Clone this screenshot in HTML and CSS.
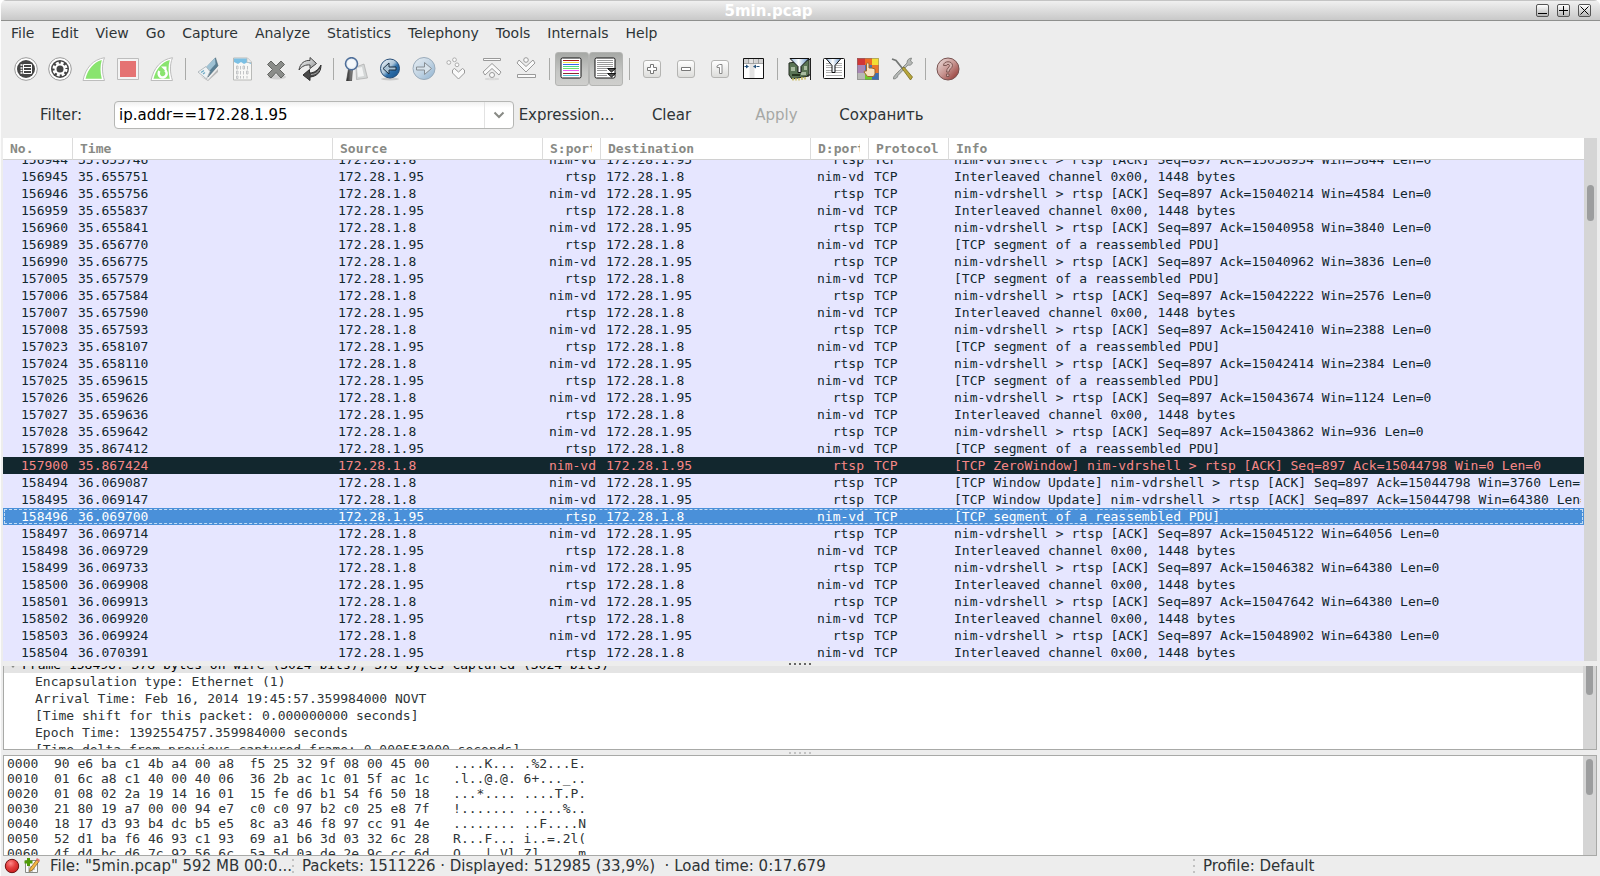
FILE: index.html
```html
<!DOCTYPE html>
<html lang="en">
<head>
<meta charset="utf-8">
<title>5min.pcap</title>
<link rel="stylesheet" href="styles.css">
</head>
<body>
<svg class="defs" aria-hidden="true">
  <defs>
    <linearGradient id="silver" x1="0" y1="0" x2="1" y2="1"><stop offset="0" stop-color="#fff"/><stop offset="1" stop-color="#8d9092"/></linearGradient>
    <linearGradient id="dark" x1="0" y1="0" x2="1" y2="0"><stop offset="0" stop-color="#222"/><stop offset="1" stop-color="#999"/></linearGradient>
    <linearGradient id="blue" x1="0" y1="0" x2="1" y2="1"><stop offset="0" stop-color="#f4f8fb"/><stop offset=".45" stop-color="#a9c3d8"/><stop offset=".6" stop-color="#2d6faa"/><stop offset="1" stop-color="#174f88"/></linearGradient>
    <linearGradient id="paleblue" x1="0" y1="0" x2="1" y2="1"><stop offset="0" stop-color="#e8eef3"/><stop offset=".5" stop-color="#c3d5e4"/><stop offset="1" stop-color="#8fb2d0"/></linearGradient>
    <linearGradient id="red" x1="0" y1="0" x2="1" y2="1"><stop offset="0" stop-color="#eee3e1"/><stop offset=".5" stop-color="#c79490"/><stop offset="1" stop-color="#8c2a26"/></linearGradient>
    <linearGradient id="funnel" x1="0" y1="0" x2="1" y2="0"><stop offset="0" stop-color="#8fb4dc"/><stop offset=".45" stop-color="#fff"/><stop offset="1" stop-color="#5f8fc6"/></linearGradient>
    <linearGradient id="key" x1="0" y1="0" x2="0" y2="1"><stop offset="0" stop-color="#fff"/><stop offset="1" stop-color="#dcdcda"/></linearGradient>
    <radialGradient id="led" cx=".4" cy=".3" r=".7"><stop offset="0" stop-color="#f88"/><stop offset=".5" stop-color="#e44040"/><stop offset="1" stop-color="#cc2020"/></radialGradient>
  </defs>
</svg>
<div class="window">
  <header class="titlebar">
    <h1 class="title">5min.pcap</h1>
    <div class="controls">
      <button class="control" aria-label="Minimize"><svg viewBox="0 0 11 11"><path d="M1 8.500h9"/></svg></button>
      <button class="control" aria-label="Maximize"><svg viewBox="0 0 11 11"><path d="M1 5.500h9M5.500 1v9"/></svg></button>
      <button class="control" aria-label="Close"><svg viewBox="0 0 11 11"><path d="M1.500 1.500l8 8M9.500 1.500l-8 8"/></svg></button>
    </div>
  </header>
  <nav class="menubar">
    <a href="#file">File</a><a href="#edit">Edit</a><a href="#view">View</a><a href="#go">Go</a><a href="#capture">Capture</a><a href="#analyze">Analyze</a><a href="#statistics">Statistics</a><a href="#telephony">Telephony</a><a href="#tools">Tools</a><a href="#internals">Internals</a><a href="#help">Help</a>
  </nav>
  <div class="toolbar" role="toolbar" aria-label="Main toolbar">
    <button class="tool" aria-label="Interfaces"><svg viewBox="0 0 24 24"><circle cx="12" cy="12" r="11.300" fill="#fff" stroke="#9a9a9a"/><circle cx="12" cy="12" r="9" fill="#454545"/><path d="M6.500 8h2M6.500 11h2M6.500 13.500h2M6.500 16h2" stroke="#fff" stroke-width="1.500"/><path d="M9.500 7.500h8v9h-8zM9.500 10.500h8M9.500 13.500h8" fill="none" stroke="#fff"/></svg></button>
    <button class="tool" aria-label="Capture options"><svg viewBox="0 0 24 24"><circle cx="12" cy="12" r="11.300" fill="#fff" stroke="#9a9a9a"/><circle cx="12" cy="12" r="9" fill="#454545"/><circle cx="12" cy="12" r="6" fill="none" stroke="#fff" stroke-width="3" stroke-dasharray="2.800 1.912"/><circle cx="12" cy="12" r="4.500" fill="none" stroke="#fff" stroke-width="2"/></svg></button>
    <button class="tool" aria-label="Start capture"><svg viewBox="0 0 24 24"><path d="M1 23.500C3.500 11 11 2.500 22.500.700 19.500 8 20 16 22.500 23.500z" fill="#fff" stroke="#bdbdbd"/><path d="M3.500 21.800C6 12 11.500 5.500 19.800 3 18 9 18.200 15.500 19.800 21.800z" fill="#89e46f"/></svg></button>
    <button class="tool" aria-label="Stop capture"><svg viewBox="0 0 24 24"><path d="M1.500 1.500h21v21h-21z" fill="#f4f4f4" stroke="#bdbdbd"/><path d="M4 4h16v16H4z" fill="#e57373"/></svg></button>
    <button class="tool" aria-label="Restart capture"><svg viewBox="0 0 24 24"><path d="M1 23.500C3.500 11 11 2.500 22.500.700 19.500 8 20 16 22.500 23.500z" fill="#fff" stroke="#bdbdbd"/><path d="M3.500 21.800C6 12 11.500 5.500 19.800 3 18 9 18.200 15.500 19.800 21.800z" fill="#89e46f"/><path d="M9.500 14a4 4 0 1 0 5.500-.800" fill="none" stroke="#fff" stroke-width="2.500"/><path d="M11 9.500h5.500V15z" fill="#fff"/></svg></button>
    <span class="separator"></span>
    <button class="tool" aria-label="Open"><svg viewBox="0 0 24 24"><path d="M4 19l8 4 10-11v3L12 24z" fill="#555" opacity=".35"/><path d="M9 12L19.500.800l2.500 8L12 20z" fill="#5a7f94" stroke="#496472" stroke-width=".6"/><path d="M9 11L19 1l.5 6-8 9z" fill="#9fc2d4"/><path d="M2 15l8-5.500 4 5L10.500 22z" fill="#eef2f4" stroke="#a5adb2" stroke-width=".8"/><path d="M5 15.500l3-2M7 17l2-1.500" stroke="#6eaac4" stroke-width="1.300"/></svg></button>
    <button class="tool" aria-label="Save"><svg viewBox="0 0 24 24"><path d="M3.500 1h14l4 4v18h-18z" fill="#f8f8f6" stroke="#b9bab8"/><path d="M4 1.500h13l4 4V7l-4-1.500-3 1.500-3-2-3 2L4 5z" fill="#7cc0e4"/><path d="M17 1v4.500h4.500" fill="#eee" stroke="#b9bab8" stroke-width=".7"/><g fill="none" stroke="#c2c4c6"><path d="M6.500 9v3h1.500v-3zM10.500 9v3.500M13 9v3h1.500v-3zM17.500 9v3.500M6.500 14v3h1.500v-3zM10.500 14v3.500M13.500 14v3.500M16.500 14v3h1.500v-3zM6.500 19v2.500h1.500V19zM10.500 19v2.500M13.500 19v2.500M17 19v2.500"/></g></svg></button>
    <button class="tool" aria-label="Close file"><svg viewBox="0 0 24 24"><ellipse cx="13" cy="20" rx="9" ry="2.500" fill="#000" opacity=".12"/><path d="M7 4l5 5 5-5 3.500 3.500-5 5 5 5L17 21l-5-5.500L7 21l-3.500-3.500 5-5-5-5z" fill="#8b8d8a" stroke="#626461" stroke-linejoin="round"/></svg></button>
    <button class="tool" aria-label="Reload"><svg viewBox="0 0 24 24"><path d="M1 13C2 6 7 3 12 3.500V.500L18.500 6.500 12 11.500V8C8 7.500 4 9 1 13z" fill="url(#silver)" stroke="#444"/><path d="M23 8c0 8-5 11.500-11 12v3.500L5 18l6.500-5.500V16c5 0 8.500-3 11.500-8z" fill="#494949" stroke="#2d2d2d"/><path d="M13 17.500c4 0 7-2 8.500-5" fill="none" stroke="#a5a5a5"/></svg></button>
    <span class="separator"></span>
    <button class="tool" aria-label="Find"><svg viewBox="0 0 24 24"><path d="M12 10l8-3 3.500 14-11 1.500z" fill="#d3d6d6" stroke="#aaa" stroke-width=".7"/><path d="M13 11l5-1 2 9-6 1z" fill="#fff" opacity=".7"/><path d="M4.500 12h4L7.500 24h-5z" fill="url(#dark)" stroke="#444" stroke-width=".7"/><circle cx="7.500" cy="6.700" r="6" fill="#e9eff5" stroke="#4f6f9a" stroke-width="1.600"/><circle cx="7.500" cy="6.700" r="4" fill="#fff" opacity=".6"/></svg></button>
    <button class="tool" aria-label="Back"><svg viewBox="0 0 24 24"><ellipse cx="12" cy="22" rx="9" ry="1.500" opacity=".15"/><circle cx="12" cy="11.500" r="9.500" fill="url(#blue)" stroke="#294f78"/><path d="M5 11.500l6-5.500v4h7v3h-7v4z" fill="#a9c3d6" stroke="#1c2e40"/></svg></button>
    <button class="tool" aria-label="Forward"><svg viewBox="0 0 24 24"><circle cx="12" cy="11.500" r="11" fill="url(#paleblue)" stroke="#9aabba"/><path d="M19.500 11.500l-7-6v4.500h-8v3h8v4.500z" fill="#d8e3eb" stroke="#878e94"/></svg></button>
    <button class="tool" aria-label="Go to packet"><svg viewBox="0 0 24 24" fill="#fafafa" stroke="#adadad"><circle cx="2.800" cy="5.500" r="1.900"/><circle cx="8.500" cy="2.800" r="1.900"/><circle cx="11" cy="7.800" r="1.900"/><path d="M6.500 13l2-1.500 4 3.500 4-3.500 2 1.500v3l-6 6-6-6z" stroke="#999"/></svg></button>
    <button class="tool" aria-label="First packet"><svg viewBox="0 0 24 24" fill="#fafafa" stroke="#999"><path d="M3.500 1.500h17v2h-17z"/><path d="M12 6.500l9 8.500-2 3-7-6.500L5 18l-2-3z"/><circle cx="12" cy="18" r="2.500"/><ellipse cx="12" cy="22" rx="7" ry=".7" opacity=".25"/></svg></button>
    <button class="tool" aria-label="Last packet"><svg viewBox="0 0 24 24" fill="#fafafa" stroke="#999"><circle cx="12" cy="3" r="2.300"/><path d="M3 6l2-3 7 6.500L19 3l2 3-9 9z"/><path d="M3.500 17.500h18v3h-18z"/></svg></button>
    <span class="separator"></span>
    <button class="tool pressed" aria-label="Colorize" aria-pressed="true"><svg viewBox="1 1 24 24"><rect x="2" y="2" width="20" height="20" rx="1.500" fill="#fff" stroke="#111"/><path d="M4 4.500h16" stroke="#a31818"/><path d="M4 6.500h16" stroke="#f3e04a"/><path d="M4 8.500h16" stroke="#3767f0"/><path d="M4 10.500h16" stroke="#4cd787"/><path d="M4 12.500h16" stroke="#6fe06f"/><path d="M4 14.500h16" stroke="#ee5bee"/><path d="M4 17.500h16" stroke="#8e2430"/><path d="M4 19.500h16" stroke="#56c7d6"/></svg></button>
    <button class="tool pressed" aria-label="Auto scroll" aria-pressed="true"><svg viewBox="1 1 24 24"><rect x="2" y="2" width="20" height="20" rx="1.500" fill="#fff" stroke="#111"/><path d="M4 4.500h16M4 6.500h16M4 8.500h16M4 10.500h16M4 12.500h10M4 14.500h10M4 17.500h10M4 19.500h10" stroke="#999"/><path d="M14.500 12.500h8l-4 3.500zM14.500 17.500h8l-4 3.500z" fill="#555" stroke="#111" stroke-linejoin="round"/></svg></button>
    <span class="separator"></span>
    <button class="tool" aria-label="Zoom in"><svg viewBox="0 0 24 24"><rect x="3.500" y="3.500" width="17" height="17" rx="2.500" fill="url(#key)" stroke="#b4b4b2"/><path d="M10.500 7.500h3v3h3v3h-3v3h-3v-3h-3v-3h3z" fill="#fff" stroke="#777"/></svg></button>
    <button class="tool" aria-label="Zoom out"><svg viewBox="0 0 24 24"><rect x="3.500" y="3.500" width="17" height="17" rx="2.500" fill="url(#key)" stroke="#b4b4b2"/><path d="M7.500 10.500h9v3h-9z" fill="#fff" stroke="#777"/></svg></button>
    <button class="tool" aria-label="Normal size"><svg viewBox="0 0 24 24"><rect x="3.500" y="3.500" width="17" height="17" rx="2.500" fill="url(#key)" stroke="#b4b4b2"/><path d="M9 10.500v-1.500l2.500-1.500h2.500v9h-2.500v-6z" fill="#fff" stroke="#888"/></svg></button>
    <button class="tool" aria-label="Resize columns"><svg viewBox="0 0 24 24"><path d="M2 2h20v20H2z" fill="#fff"/><path d="M2 2h20v4.500H2z" fill="#d2d2d2"/><path d="M7.500 2h5v20h-5z" fill="#e3e3e3"/><path d="M6.500 2v4.500M11.500 2v4.500M16.500 2v4.500M2 6.500h20" stroke="#888" stroke-width=".7"/><path d="M1.500 1.500h20v20h-20z" fill="none" stroke="#111"/><path d="M2.500 9.500h3M17.500 9.500h-3" stroke="#24527c"/><path d="M4 7.500l3 2-3 2zM14 7.500l-3 2 3 2z" fill="#24527c"/></svg></button>
    <span class="separator"></span>
    <button class="tool" aria-label="Capture filters"><svg viewBox="0 0 24 24"><path d="M1 6l20-3v16l-17 3-3-4z" fill="#5a7455" stroke="#222b20"/><path d="M22.500 1v22M20 2.500h3M19 18.500l4-1" stroke="#222"/><path d="M3 10h4v4H3zM16 9h3v4h-3zM13 15h5v3h-5z" fill="#a9bba0"/><path d="M4 17h8v2H4z" fill="#26341f"/><path d="M5 21v2.500M8 21v2.500M11 21v2.500M14 20v3M17 20v2.500" stroke="#c9bd62" stroke-width="1.500"/><path d="M2 1.500h19l-8 8v6h-3v-6z" fill="url(#funnel)" stroke="#111"/></svg></button>
    <button class="tool" aria-label="Display filters"><svg viewBox="1 1 24 24"><rect x="2.500" y="2.500" width="21" height="20" rx="1" fill="#fff" stroke="#111"/><path d="M5 7.500h16M5 9.500h16M5 11.500h16M5 14.500h16M5 16.500h16M5 19.500h16" stroke="#b0b0b0"/><path d="M5 2.500h15l-6 7v7h-3v-7z" fill="url(#funnel)" stroke="#111"/></svg></button>
    <button class="tool" aria-label="Coloring rules"><svg viewBox="0 0 24 24"><path d="M1 1h8v7H1z" fill="#d13636"/><path d="M9 1h7v7H9z" fill="#ee6a23"/><path d="M16 1h7v7h-7z" fill="#f3df35"/><path d="M1 8h8v8H1z" fill="#a986b5"/><path d="M9 8h7v8H9z" fill="#4774b4"/><path d="M16 8h7v8h-7z" fill="#e9772c"/><path d="M1 16h8v7H1z" fill="#b8b8b5"/><path d="M9 16h7v7H9z" fill="#6fc92d"/><path d="M16 16h7v7h-7z" fill="#3b6db3"/><path d="M1.500 1.500h21v21h-21z" fill="none" stroke="#777" stroke-opacity=".5"/><path d="M10.500 6.500q1.500-1.500 2.500 0v4.500q3-.5 6 1v5l-1.500 2.500h-6L8 15q0-1.500 2.500-1z" fill="#f8e1bf" stroke="#a1672a"/></svg></button>
    <button class="tool" aria-label="Preferences"><svg viewBox="0 0 24 24"><path d="M3.500 22c-.5-3 2-3.500 2.500-5L17 6c0-3 1.500-4.500 4.500-5l-1 3 2 1.500c-1 3-3 3-4.500 2.500L8 18.500c-.5 2-2 3.500-4.500 3.500z" fill="#b5b8b6" stroke="#7a7d7b" stroke-width=".8"/><path d="M2 2l4 1.500 6.500 8" fill="none" stroke="#747775" stroke-width="1.800"/><path d="M12 11.500l2-1.500 8.500 10-2 3z" fill="#b7a63c" stroke="#786c20" stroke-width=".8"/></svg></button>
    <span class="separator"></span>
    <button class="tool" aria-label="Help"><svg viewBox="0 0 24 24"><circle cx="12" cy="12" r="11" fill="url(#red)" stroke="#785250"/><path d="M7.500 8.500c0-5 9-5 9 0 0 3-3.500 3.200-3.500 6.500h-2.500c0-4 3-4.500 3-6.500 0-1.500-3-1.500-3 0zM10.500 17h2.500v2.500h-2.500z" fill="#d5b2ae" stroke="#76504d" stroke-width=".9"/></svg></button>
  </div>
  <form class="filterbar">
    <label class="filter-label" for="filter">Filter:</label>
    <div class="combo">
      <input id="filter" class="combo-input" type="text" value="ip.addr==172.28.1.95" spellcheck="false" autocomplete="off">
      <button class="combo-arrow" type="button" aria-label="Recent filters"><svg viewBox="0 0 12 8"><path d="M1.500 1.500L6 6l4.500-4.500"/></svg></button>
    </div>
    <button class="action" type="button">Expression...</button>
    <button class="action" type="button">Clear</button>
    <button class="action" type="button" disabled>Apply</button>
    <button class="action" type="button" lang="ru">Сохранить</button>
  </form>
  <main class="panes">
    <section class="pane list">
      <table class="packets">
        <thead>
          <tr><th>No.</th><th>Time</th><th>Source</th><th>S:port</th><th>Destination</th><th>D:port</th><th>Protocol</th><th>Info</th></tr>
        </thead>
        <tbody>
          <tr><td>156944</td><td>35.655746</td><td>172.28.1.8</td><td>nim-vd</td><td>172.28.1.95</td><td>rtsp</td><td>TCP</td><td>nim-vdrshell &gt; rtsp [ACK] Seq=897 Ack=15038954 Win=5844 Len=0</td></tr>
          <tr><td>156945</td><td>35.655751</td><td>172.28.1.95</td><td>rtsp</td><td>172.28.1.8</td><td>nim-vd</td><td>TCP</td><td>Interleaved channel 0x00, 1448 bytes</td></tr>
          <tr><td>156946</td><td>35.655756</td><td>172.28.1.8</td><td>nim-vd</td><td>172.28.1.95</td><td>rtsp</td><td>TCP</td><td>nim-vdrshell &gt; rtsp [ACK] Seq=897 Ack=15040214 Win=4584 Len=0</td></tr>
          <tr><td>156959</td><td>35.655837</td><td>172.28.1.95</td><td>rtsp</td><td>172.28.1.8</td><td>nim-vd</td><td>TCP</td><td>Interleaved channel 0x00, 1448 bytes</td></tr>
          <tr><td>156960</td><td>35.655841</td><td>172.28.1.8</td><td>nim-vd</td><td>172.28.1.95</td><td>rtsp</td><td>TCP</td><td>nim-vdrshell &gt; rtsp [ACK] Seq=897 Ack=15040958 Win=3840 Len=0</td></tr>
          <tr><td>156989</td><td>35.656770</td><td>172.28.1.95</td><td>rtsp</td><td>172.28.1.8</td><td>nim-vd</td><td>TCP</td><td>[TCP segment of a reassembled PDU]</td></tr>
          <tr><td>156990</td><td>35.656775</td><td>172.28.1.8</td><td>nim-vd</td><td>172.28.1.95</td><td>rtsp</td><td>TCP</td><td>nim-vdrshell &gt; rtsp [ACK] Seq=897 Ack=15040962 Win=3836 Len=0</td></tr>
          <tr><td>157005</td><td>35.657579</td><td>172.28.1.95</td><td>rtsp</td><td>172.28.1.8</td><td>nim-vd</td><td>TCP</td><td>[TCP segment of a reassembled PDU]</td></tr>
          <tr><td>157006</td><td>35.657584</td><td>172.28.1.8</td><td>nim-vd</td><td>172.28.1.95</td><td>rtsp</td><td>TCP</td><td>nim-vdrshell &gt; rtsp [ACK] Seq=897 Ack=15042222 Win=2576 Len=0</td></tr>
          <tr><td>157007</td><td>35.657590</td><td>172.28.1.95</td><td>rtsp</td><td>172.28.1.8</td><td>nim-vd</td><td>TCP</td><td>Interleaved channel 0x00, 1448 bytes</td></tr>
          <tr><td>157008</td><td>35.657593</td><td>172.28.1.8</td><td>nim-vd</td><td>172.28.1.95</td><td>rtsp</td><td>TCP</td><td>nim-vdrshell &gt; rtsp [ACK] Seq=897 Ack=15042410 Win=2388 Len=0</td></tr>
          <tr><td>157023</td><td>35.658107</td><td>172.28.1.95</td><td>rtsp</td><td>172.28.1.8</td><td>nim-vd</td><td>TCP</td><td>[TCP segment of a reassembled PDU]</td></tr>
          <tr><td>157024</td><td>35.658110</td><td>172.28.1.8</td><td>nim-vd</td><td>172.28.1.95</td><td>rtsp</td><td>TCP</td><td>nim-vdrshell &gt; rtsp [ACK] Seq=897 Ack=15042414 Win=2384 Len=0</td></tr>
          <tr><td>157025</td><td>35.659615</td><td>172.28.1.95</td><td>rtsp</td><td>172.28.1.8</td><td>nim-vd</td><td>TCP</td><td>[TCP segment of a reassembled PDU]</td></tr>
          <tr><td>157026</td><td>35.659626</td><td>172.28.1.8</td><td>nim-vd</td><td>172.28.1.95</td><td>rtsp</td><td>TCP</td><td>nim-vdrshell &gt; rtsp [ACK] Seq=897 Ack=15043674 Win=1124 Len=0</td></tr>
          <tr><td>157027</td><td>35.659636</td><td>172.28.1.95</td><td>rtsp</td><td>172.28.1.8</td><td>nim-vd</td><td>TCP</td><td>Interleaved channel 0x00, 1448 bytes</td></tr>
          <tr><td>157028</td><td>35.659642</td><td>172.28.1.8</td><td>nim-vd</td><td>172.28.1.95</td><td>rtsp</td><td>TCP</td><td>nim-vdrshell &gt; rtsp [ACK] Seq=897 Ack=15043862 Win=936 Len=0</td></tr>
          <tr><td>157899</td><td>35.867412</td><td>172.28.1.95</td><td>rtsp</td><td>172.28.1.8</td><td>nim-vd</td><td>TCP</td><td>[TCP segment of a reassembled PDU]</td></tr>
          <tr class="bad"><td>157900</td><td>35.867424</td><td>172.28.1.8</td><td>nim-vd</td><td>172.28.1.95</td><td>rtsp</td><td>TCP</td><td>[TCP ZeroWindow] nim-vdrshell &gt; rtsp [ACK] Seq=897 Ack=15044798 Win=0 Len=0</td></tr>
          <tr><td>158494</td><td>36.069087</td><td>172.28.1.8</td><td>nim-vd</td><td>172.28.1.95</td><td>rtsp</td><td>TCP</td><td>[TCP Window Update] nim-vdrshell &gt; rtsp [ACK] Seq=897 Ack=15044798 Win=3760 Len=0</td></tr>
          <tr><td>158495</td><td>36.069147</td><td>172.28.1.8</td><td>nim-vd</td><td>172.28.1.95</td><td>rtsp</td><td>TCP</td><td>[TCP Window Update] nim-vdrshell &gt; rtsp [ACK] Seq=897 Ack=15044798 Win=64380 Len=0</td></tr>
          <tr class="selected"><td>158496</td><td>36.069700</td><td>172.28.1.95</td><td>rtsp</td><td>172.28.1.8</td><td>nim-vd</td><td>TCP</td><td>[TCP segment of a reassembled PDU]</td></tr>
          <tr><td>158497</td><td>36.069714</td><td>172.28.1.8</td><td>nim-vd</td><td>172.28.1.95</td><td>rtsp</td><td>TCP</td><td>nim-vdrshell &gt; rtsp [ACK] Seq=897 Ack=15045122 Win=64056 Len=0</td></tr>
          <tr><td>158498</td><td>36.069729</td><td>172.28.1.95</td><td>rtsp</td><td>172.28.1.8</td><td>nim-vd</td><td>TCP</td><td>Interleaved channel 0x00, 1448 bytes</td></tr>
          <tr><td>158499</td><td>36.069733</td><td>172.28.1.8</td><td>nim-vd</td><td>172.28.1.95</td><td>rtsp</td><td>TCP</td><td>nim-vdrshell &gt; rtsp [ACK] Seq=897 Ack=15046382 Win=64380 Len=0</td></tr>
          <tr><td>158500</td><td>36.069908</td><td>172.28.1.95</td><td>rtsp</td><td>172.28.1.8</td><td>nim-vd</td><td>TCP</td><td>Interleaved channel 0x00, 1448 bytes</td></tr>
          <tr><td>158501</td><td>36.069913</td><td>172.28.1.8</td><td>nim-vd</td><td>172.28.1.95</td><td>rtsp</td><td>TCP</td><td>nim-vdrshell &gt; rtsp [ACK] Seq=897 Ack=15047642 Win=64380 Len=0</td></tr>
          <tr><td>158502</td><td>36.069920</td><td>172.28.1.95</td><td>rtsp</td><td>172.28.1.8</td><td>nim-vd</td><td>TCP</td><td>Interleaved channel 0x00, 1448 bytes</td></tr>
          <tr><td>158503</td><td>36.069924</td><td>172.28.1.8</td><td>nim-vd</td><td>172.28.1.95</td><td>rtsp</td><td>TCP</td><td>nim-vdrshell &gt; rtsp [ACK] Seq=897 Ack=15048902 Win=64380 Len=0</td></tr>
          <tr><td>158504</td><td>36.070391</td><td>172.28.1.95</td><td>rtsp</td><td>172.28.1.8</td><td>nim-vd</td><td>TCP</td><td>Interleaved channel 0x00, 1448 bytes</td></tr>
        </tbody>
      </table>
      <div class="scrollbar"><div class="thumb"></div></div>
    </section>
    <div class="splitter active"><i></i><i></i><i></i><i></i><i></i></div>
    <section class="pane details">
      <ul class="tree">
        <li class="node"><svg class="expander" viewBox="0 0 10 10"><path d="M1 3h8L5 8z"/></svg>Frame 158496: 378 bytes on wire (3024 bits), 378 bytes captured (3024 bits)</li>
        <li class="leaf">Encapsulation type: Ethernet (1)</li>
        <li class="leaf">Arrival Time: Feb 16, 2014 19:45:57.359984000 NOVT</li>
        <li class="leaf">[Time shift for this packet: 0.000000000 seconds]</li>
        <li class="leaf">Epoch Time: 1392554757.359984000 seconds</li>
        <li class="leaf">[Time delta from previous captured frame: 0.000553000 seconds]</li>
      </ul>
      <div class="scrollbar"><div class="thumb"></div></div>
    </section>
    <div class="splitter"><i></i><i></i><i></i><i></i><i></i></div>
    <section class="pane bytes">
      <pre class="hex">0000  90 e6 ba c1 4b a4 00 a8  f5 25 32 9f 08 00 45 00   ....K... .%2...E.
0010  01 6c a8 c1 40 00 40 06  36 2b ac 1c 01 5f ac 1c   .l..@.@. 6+..._..
0020  01 08 02 2a 19 14 16 01  15 fe d6 b1 54 f6 50 18   ...*.... ....T.P.
0030  21 80 19 a7 00 00 94 e7  c0 c0 97 b2 c0 25 e8 7f   !....... .....%..
0040  18 17 d3 93 b4 dc b5 e5  8c a3 46 f8 97 cc 91 4e   ........ ..F....N
0050  52 d1 ba f6 46 93 c1 93  69 a1 b6 3d 03 32 6c 28   R...F... i..=.2l(
0060  4f d4 bc d6 7c 92 56 6c  5a 5d 0a de 2e 9c cc 6d   O...|.Vl Z].....m</pre>
      <div class="scrollbar"><div class="thumb"></div></div>
    </section>
  </main>
  <footer class="statusbar">
    <button class="status-icon" aria-label="Expert info"><svg viewBox="0 0 16 16"><circle cx="8" cy="8" r="6.700" fill="url(#led)" stroke="#6e1212"/></svg></button>
    <button class="status-icon" aria-label="Capture comment"><svg viewBox="0 0 16 16"><path d="M1.500 2.500h12v12h-12z" fill="#fafafa" stroke="#888a85"/><path d="M4 9h6M4 11h7M4 13h5" stroke="#999"/><path d="M6 10.500L12.500 2l2.500 1.500-6.500 8.500-3 1.500z" fill="#f4b545" stroke="#7b5a1c" stroke-width=".7"/><path d="M12 1.500l1-1.500 3 2-1 2z" fill="#e07070"/><path d="M3 0h3v2.500h2.500v3H6V8H3V5.500H.500v-3H3z" fill="#4e9a06"/></svg></button>
    <span class="status-file">File: "5min.pcap" 592 MB 00:0...</span>
    <span class="grip"><i></i><i></i><i></i></span>
    <span class="status-packets">Packets: 1511226 · Displayed: 512985 (33,9%) &nbsp;· Load time: 0:17.679</span>
    <span class="grip"><i></i><i></i><i></i></span>
    <span class="status-profile">Profile: Default</span>
  </footer>
</div>
</body>
</html>
```
FILE: styles.css
```css
* {
  box-sizing: border-box;
}

body {
  margin: 0;
  background: #fff;
  color: #2e3436;
  font: 15px/20px "DejaVu Sans", sans-serif;
}

button {
  margin: 0;
  padding: 0;
  border: 0;
  background: none;
  color: inherit;
  font: inherit;
}

svg {
  display: block;
}

.defs {
  position: absolute;
  width: 0;
  height: 0;
}

.window {
  display: flex;
  flex-direction: column;
  height: 100vh;
  border-left: 1px solid #fcfcfc;
  border-radius: 6px 6px 0 0;
  background: #ededed;
  overflow: hidden;
}

/* Title bar */

.titlebar {
  display: flex;
  flex: none;
  align-items: center;
  height: 21px;
  padding-right: 9px;
  border-top: 1px solid #c4c4c4;
  border-bottom: 1px solid #8f908e;
  background: linear-gradient(#f0f0f0, #c9c9c9);
}

.title {
  flex: 1;
  margin: 0;
  color: #fff;
  font-size: 15px;
  line-height: 18px;
  text-align: center;
}

.controls {
  display: flex;
  gap: 8px;
}

.control {
  width: 13px;
  height: 13px;
  border: 1px solid #555;
  border-radius: 2px;
  background: linear-gradient(#fff, #b5b5b5);
}

.control svg {
  width: 11px;
  height: 11px;
  fill: none;
  stroke: #000;
}

/* Menu bar */

.menubar {
  display: flex;
  flex: none;
  gap: 17px;
  padding: 2px 10px;
  font-size: 14px;
}

.menubar a {
  color: inherit;
  text-decoration: none;
}

/* Toolbar */

.toolbar {
  display: flex;
  flex: none;
  align-items: center;
  height: 48px;
  padding: 0 8px;
}

.tool {
  display: grid;
  place-items: center;
  width: 34px;
  height: 34px;
  border-radius: 3px;
}

.tool svg {
  width: 24px;
  height: 24px;
}

.tool.pressed {
  background: linear-gradient(#a6a8a5, #c6c7c5 60%, #cfcfcd);
  border: 1px solid #b4b5b3;
}

.separator {
  width: 1px;
  height: 22px;
  margin: 0 5px 0 6px;
  background: #a9aaa8;
}

/* Filter bar */

.filterbar {
  display: flex;
  flex: none;
  align-items: center;
  height: 45px;
  padding: 0 0 2px 39px;
}

.filter-label {
  width: 74px;
}

.combo {
  display: flex;
  width: 400px;
  height: 28px;
  border: 1px solid #b5b6b4;
  border-radius: 4px;
  background: linear-gradient(#f0f0f0, #fff 6px);
}

.combo-input {
  flex: 1;
  min-width: 0;
  padding: 0 4px;
  border: 0;
  background: none;
  color: #000;
  font: inherit;
  outline: none;
}

.combo-arrow {
  display: grid;
  place-items: center;
  width: 29px;
  border-left: 1px solid #e2e2e2;
}

.combo-arrow svg {
  width: 12px;
  height: 8px;
  fill: none;
  stroke: #888a85;
  stroke-width: 2;
}

.action {
  width: 105px;
  text-align: center;
}

.action:disabled {
  color: #a6a8a5;
}

/* Panes */

.panes {
  display: flex;
  flex: 1;
  flex-direction: column;
  min-height: 0;
  padding: 0 3px 0 2px;
  font: 13px/17px "DejaVu Sans Mono", monospace;
}

.pane {
  display: flex;
  min-height: 0;
  background: #fff;
  overflow: hidden;
}

.list {
  flex: 1;
}

.details {
  flex: none;
  height: 84px;
  border: 1px solid #a8a9a7;
  border-top: 0;
}

.bytes {
  flex: none;
  height: 101px;
  border: 1px solid #a8a9a7;
}

.scrollbar {
  flex: none;
  width: 13px;
  padding: 3px;
  background: #d5d5d5;
}

.thumb {
  width: 7px;
  height: 36px;
  border-radius: 4px;
  background: #9c9d9e;
}

.list .thumb {
  margin-top: 44px;
}

.details .thumb {
  margin-top: -10px;
}

.splitter {
  display: flex;
  flex: none;
  justify-content: center;
  align-items: center;
  gap: 3px;
  height: 5px;
}

.splitter i {
  width: 2px;
  height: 2px;
  background: #c2c2c2;
}

.splitter.active i {
  background: #666;
}

/* Packet list */

.packets {
  display: flex;
  flex: 1;
  flex-direction: column;
  min-width: 0;
}

.packets thead,
.packets tbody {
  display: block;
}

.packets tbody {
  flex: 1;
  min-height: 0;
  background: #e6e6ff;
  color: #12272e;
  overflow: hidden;
}

.packets tr {
  display: grid;
  grid-template-columns: 70px 260px 210px 58px 210px 58px 80px minmax(0, 1fr);
}

.packets th,
.packets td {
  overflow: clip;
  overflow-clip-margin: content-box;
  text-align: left;
  white-space: pre;
}

.packets th {
  height: 22px;
  padding: 2px 8px 2px 7px;
  border-right: 1px solid #dcdcdc;
  border-bottom: 1px solid #d0d0d0;
  color: #888a85;
  font-weight: bold;
}

.packets th:last-child {
  border-right: 0;
}

.packets td {
  height: 17px;
  padding: 0 3px 0 5px;
}

.packets td:nth-child(1),
.packets td:nth-child(4),
.packets td:nth-child(6) {
  padding: 0 5px 0 3px;
  text-align: right;
}

.packets tbody tr:first-child {
  margin-top: -9px;
}

.packets .bad {
  background: #12272e;
  color: #f78787;
}

.packets .selected {
  outline: 1px dashed #c5dcf3;
  outline-offset: -2px;
  background: #4a90d9;
  color: #fff;
}

/* Packet details */

.tree {
  flex: 1;
  min-width: 0;
  margin: -10px 0 0;
  padding: 0;
  list-style: none;
  white-space: nowrap;
}

.node {
  display: flex;
  align-items: center;
  gap: 4px;
  padding-left: 4px;
  background: #e4e4e4;
  color: #000;
}

.expander {
  width: 10px;
  height: 10px;
  fill: #888a85;
}

.leaf {
  padding-left: 31px;
}

/* Packet bytes */

.hex {
  flex: 1;
  min-width: 0;
  margin: 0;
  padding: 0 3px;
  font: inherit;
  line-height: 15px;
}

/* Status bar */

.statusbar {
  display: flex;
  flex: none;
  align-items: center;
  height: 20px;
  padding-left: 3px;
}

.status-icon {
  width: 16px;
  height: 16px;
  margin-right: 4px;
}

.status-file {
  width: 248px;
  padding-left: 6px;
  white-space: nowrap;
}

.status-packets {
  flex: 1;
  white-space: nowrap;
}

.status-profile {
  width: 397px;
  white-space: nowrap;
}

.grip {
  display: grid;
  gap: 4px;
  width: 10px;
}

.grip i {
  width: 2px;
  height: 2px;
  background: #c2c2c2;
}
```
